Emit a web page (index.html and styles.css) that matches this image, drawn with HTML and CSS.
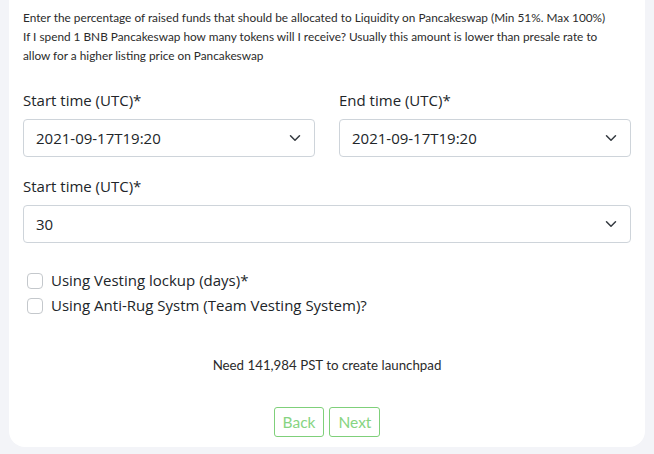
FILE: index.html
```html
<!DOCTYPE html>
<html>
<head>
<meta charset="utf-8">
<link rel="stylesheet" href="styles.css">
</head>
<body>
<div class="card">
  <div class="help">
    <p>Enter the percentage of raised funds that should be allocated to Liquidity on Pancakeswap (Min 51%. Max 100%)</p>
    <p>If I spend 1 BNB Pancakeswap how many tokens will I receive? Usually this amount is lower than presale rate to allow for a higher listing price on Pancakeswap</p>
  </div>
  <div class="row">
    <div class="field">
      <label class="label">Start time (UTC)*</label>
      <div class="select"><span>2021-09-17T19:20</span><svg class="chev" viewBox="0 0 16 16" width="16" height="12"><path d="M2 5l6 6 6-6" fill="none" stroke="#343a40" stroke-width="2" stroke-linecap="round" stroke-linejoin="round"/></svg></div>
    </div>
    <div class="field">
      <label class="label">End time (UTC)*</label>
      <div class="select"><span>2021-09-17T19:20</span><svg class="chev" viewBox="0 0 16 16" width="16" height="12"><path d="M2 5l6 6 6-6" fill="none" stroke="#343a40" stroke-width="2" stroke-linecap="round" stroke-linejoin="round"/></svg></div>
    </div>
  </div>
  <div class="field full">
    <label class="label">Start time (UTC)*</label>
    <div class="select"><span>30</span><svg class="chev" viewBox="0 0 16 16" width="16" height="12"><path d="M2 5l6 6 6-6" fill="none" stroke="#343a40" stroke-width="2" stroke-linecap="round" stroke-linejoin="round"/></svg></div>
  </div>
  <div class="checks">
    <label class="check"><span class="box"></span>Using Vesting lockup (days)*</label>
    <label class="check"><span class="box"></span>Using Anti-Rug Systm (Team Vesting System)?</label>
  </div>
  <p class="need">Need 141,984 PST to create launchpad</p>
  <div class="buttons">
    <button class="btn">Back</button>
    <button class="btn">Next</button>
  </div>
</div>
</body>
</html>
```

FILE: styles.css
```css
html, body {
  margin: 0;
  padding: 0;
  background: #f3f4f8;
}
body {
  width: 654px;
  height: 454px;
  overflow: hidden;
}
.card {
  margin-left: 9px;
  width: 636px;
  height: 447px;
  box-sizing: border-box;
  background: #fff;
  border-radius: 0 0 16px 16px;
  padding: 8px 14px 0 14px;
  display: flex;
  flex-direction: column;
}
.help {
  max-width: 592px;
  font-family: "Lato", "Noto Sans", sans-serif;
  font-size: 11.82px;
  line-height: 19px;
  color: #2b2b2b;
}
.help p {
  margin: 0;
}
.row {
  display: flex;
  gap: 24px;
  margin-top: 23px;
}
.field {
  display: flex;
  flex-direction: column;
}
.row .field {
  flex: 1;
}
.full {
  margin-top: 17px;
}
.label {
  font-family: "Open Sans", "Noto Sans", sans-serif;
  font-size: 15px;
  line-height: 24px;
  color: #212529;
  margin-bottom: 7px;
}
.select {
  height: 38px;
  box-sizing: border-box;
  border: 1px solid #ced4da;
  border-radius: 4px;
  padding: 0 11px 0 12px;
  display: flex;
  align-items: center;
  justify-content: space-between;
  font-family: "Open Sans", "Noto Sans", sans-serif;
  font-size: 15px;
  color: #212529;
}
.chev {
  display: block;
}
.checks {
  margin-top: 25px;
  padding-left: 4px;
  display: flex;
  flex-direction: column;
}
.check {
  display: flex;
  align-items: center;
  gap: 8px;
  font-family: "Open Sans", "Noto Sans", sans-serif;
  font-size: 15px;
  line-height: 25px;
  color: #212529;
}
.box {
  width: 16px;
  height: 16px;
  box-sizing: border-box;
  border: 1px solid #c4c8cc;
  border-radius: 4px;
  background: #fff;
}
.need {
  margin: 38px 0 0;
  text-align: center;
  font-family: "Lato", "Noto Sans", sans-serif;
  font-size: 13.3px;
  line-height: 18px;
  color: #2b2b2b;
}
.buttons {
  margin-top: 33px;
  display: flex;
  justify-content: center;
  gap: 5px;
}
.btn {
  height: 30px;
  padding: 0 8px;
  background: #fff;
  border: 1px solid #7fd07a;
  border-radius: 3px;
  color: #86d481;
  font-family: "Lato", "Noto Sans", sans-serif;
  font-size: 15.5px;
}
```
